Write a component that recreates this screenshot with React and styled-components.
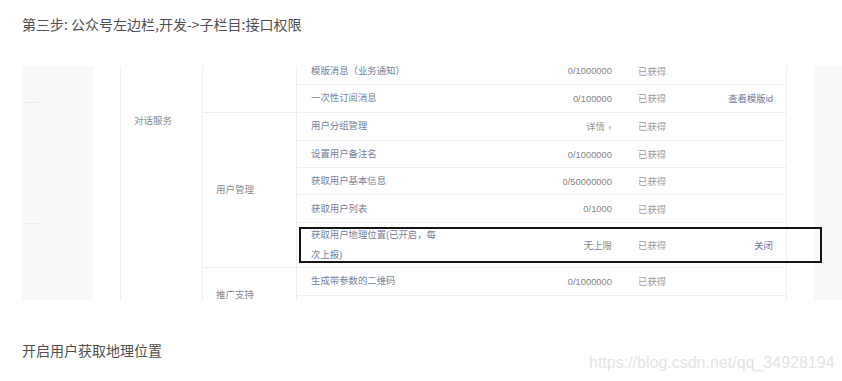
import React from "react";
import styled, { createGlobalStyle } from "styled-components";

const GlobalStyle = createGlobalStyle`
  html, body {
    margin: 0;
    padding: 0;
    background: #fff;
  }
  * {
    box-sizing: border-box;
  }
`;

const groups = [
  {
    label: "",
    rows: [
      { name: "模版消息（业务通知）", value: "0/1000000", status: "已获得" },
      { name: "一次性订阅消息", value: "0/100000", status: "已获得", action: "查看模版id" },
    ],
  },
  {
    label: "用户管理",
    rows: [
      { name: "用户分组管理", value: "详情", dropdown: true, status: "已获得" },
      { name: "设置用户备注名", value: "0/1000000", status: "已获得" },
      { name: "获取用户基本信息", value: "0/50000000", status: "已获得" },
      { name: "获取用户列表", value: "0/1000", status: "已获得" },
      { name: "获取用户地理位置(已开启，每次上报)", value: "无上限", status: "已获得", action: "关闭", tall: true },
    ],
  },
  {
    label: "推广支持",
    rows: [
      { name: "生成带参数的二维码", value: "0/1000000", status: "已获得" },
      { name: "", value: "", status: "" },
    ],
  },
];

const App = () => {
  return (
    <Page>
      <GlobalStyle />
      <Heading>第三步: 公众号左边栏,开发-&gt;子栏目:接口权限</Heading>
      <Shot>
        <SidePanel>
          <Divider $top={36} />
          <Divider $top={120} />
        </SidePanel>
        <Table>
          <Category>对话服务</Category>
          <Groups>
            {groups.map((g, i) => (
              <Group key={i} $first={i === 0}>
                <GroupLabel>{g.label}</GroupLabel>
                <Rows>
                  {g.rows.map((r, j) => (
                    <Row key={j} $first={j === 0} $tall={r.tall}>
                      <Name $tall={r.tall}>{r.name}</Name>
                      <Value $muted={r.dropdown}>
                        {r.value}
                        {r.dropdown && <Caret>▾</Caret>}
                      </Value>
                      <Status>{r.status}</Status>
                      <Action>{r.action}</Action>
                    </Row>
                  ))}
                </Rows>
              </Group>
            ))}
          </Groups>
        </Table>
        <RightPanel />
        <Highlight />
      </Shot>
      <Caption>开启用户获取地理位置</Caption>
      <Watermark>https://blog.csdn.net/qq_34928194</Watermark>
    </Page>
  );
};

export default App;

const Page = styled.div`
  position: relative;
  width: 842px;
  height: 381px;
  padding: 13px 0 0 22px;
  overflow: hidden;
  font-family: "Noto Sans CJK SC", "Liberation Sans", sans-serif;
`;

const Heading = styled.div`
  font-size: 14px;
  line-height: 22px;
  color: #505050;
`;

const Shot = styled.div`
  position: relative;
  display: flex;
  width: 820px;
  height: 234px;
  margin-top: 31px;
  overflow: hidden;
  font-family: "Liberation Sans", "Noto Sans CJK SC", sans-serif;
  font-size: 9.4px;
`;

const SidePanel = styled.div`
  width: 71px;
  flex-shrink: 0;
  background: #f7f8fa;
  display: flex;
  flex-direction: column;
`;

const Divider = styled.div`
  width: 16px;
  height: 1px;
  margin-top: ${(p) => p.$top}px;
  background: #e9eaec;
`;

const RightPanel = styled.div`
  flex: 1;
  background: #f7f8fa;
`;

const Table = styled.div`
  width: 667px;
  flex-shrink: 0;
  margin: -9px 27px 0 27px;
  display: flex;
  align-self: flex-start;
  border-left: 1px solid #efefef;
  border-right: 1px solid #efefef;
  background: #fff;
`;

const Category = styled.div`
  width: 82px;
  flex-shrink: 0;
  padding: 57px 0 0 13px;
  line-height: 14px;
  font-size: 9.5px;
  color: #8a8a8a;
  border-right: 1px solid #efefef;
`;

const Groups = styled.div`
  flex: 1;
  display: flex;
  flex-direction: column;
`;

const Group = styled.div`
  display: flex;
  border-top: ${(p) => (p.$first ? "none" : "1px solid #efefef")};
`;

const GroupLabel = styled.div`
  width: 94px;
  flex-shrink: 0;
  display: flex;
  align-items: center;
  padding: 0 0 2px 13px;
  font-size: 9.5px;
  color: #8a8a8a;
  border-right: 1px solid #efefef;
`;

const Rows = styled.div`
  flex: 1;
  display: flex;
  flex-direction: column;
`;

const Row = styled.div`
  display: flex;
  align-items: center;
  height: ${(p) => (p.$tall ? 45 : 27.3)}px;
  border-top: ${(p) => (p.$first ? "none" : "1px solid #efefef")};
`;

const Name = styled.div`
  width: 142px;
  flex-shrink: 0;
  padding-left: 14px;
  line-height: 20px;
  color: #75819a;
  white-space: ${(p) => (p.$tall ? "normal" : "nowrap")};
`;

const Value = styled.div`
  width: 173px;
  flex-shrink: 0;
  text-align: right;
  color: ${(p) => (p.$muted ? "#9a9a9a" : "#858585")};
`;

const Caret = styled.span`
  margin-left: 3px;
  font-size: 7px;
  color: #c4c4c4;
`;

const Status = styled.div`
  width: 60px;
  margin-left: 26px;
  flex-shrink: 0;
  color: #9a9a9a;
`;

const Action = styled.div`
  flex: 1;
  text-align: right;
  padding-right: 13px;
  color: #6a79a0;
`;

const Highlight = styled.div`
  position: absolute;
  left: 277px;
  top: 161px;
  width: 523px;
  height: 36px;
  border: 2px solid #141414;
`;

const Caption = styled.div`
  margin-top: 39px;
  font-size: 14px;
  line-height: 22px;
  color: #505050;
`;

const Watermark = styled.div`
  position: absolute;
  left: 589px;
  top: 353px;
  font-family: "Liberation Sans", sans-serif;
  font-size: 16px;
  line-height: 20px;
  color: #e4e4e4;
  white-space: nowrap;
`;
